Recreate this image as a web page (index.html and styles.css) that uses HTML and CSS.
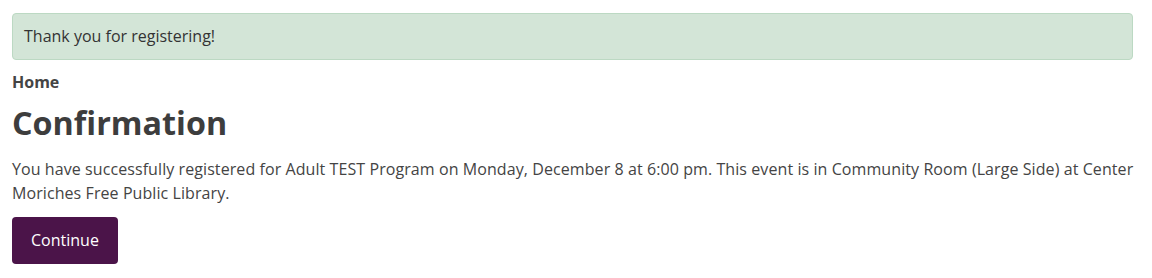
FILE: index.html
```html
<!DOCTYPE html>
<html lang="en">
<head>
    <meta charset="UTF-8">
    <title>Confirmation</title>
    <link rel="stylesheet" href="styles.css">
</head>
<body>
    <div class="page">
        <div class="alert-success">Thank you for registering!</div>
        <nav class="breadcrumb"><a href="#">Home</a></nav>
        <h1>Confirmation</h1>
        <p class="message">You have successfully registered for Adult TEST Program on Monday, December 8 at 6:00 pm. This event is in Community Room (Large Side) at Center Moriches Free Public Library.</p>
        <button class="btn-continue">Continue</button>
    </div>
</body>
</html>
```

FILE: styles.css
```css
body {
    margin: 0;
    background: #fff;
    font-family: "Open Sans", "DejaVu Sans", sans-serif;
    font-size: 16px;
    line-height: 22px;
    color: #444;
}
.page {
    padding: 13px 19px 0 12px;
}
.alert-success {
    background: #d3e5d7;
    border: 1px solid #bcd9c3;
    border-radius: 4px;
    padding: 11px 11px 12px;
    color: #333;
}
.breadcrumb {
    margin-top: 11px;
    font-weight: bold;
}
.breadcrumb a {
    color: #444;
    text-decoration: none;
}
h1 {
    margin: 9px 0 0;
    font-size: 32.3px;
    line-height: 40px;
    font-weight: bold;
    color: #3d3d3d;
}
.message {
    margin: 15px -12px 0 0;
    line-height: 24px;
    letter-spacing: 0.08px;
}
.btn-continue {
    margin-top: 12px;
    padding: 13px 19px;
    border: none;
    border-radius: 4px;
    background: #4b1449;
    color: #fff;
    font-family: inherit;
    font-size: 16px;
    line-height: 21px;
    cursor: pointer;
}
```
